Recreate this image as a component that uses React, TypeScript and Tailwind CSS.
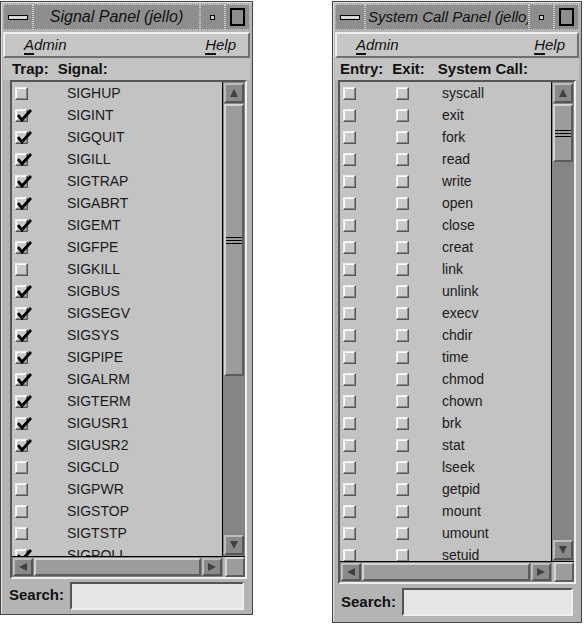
import React from "react";

const signals: [string, boolean][] = [
  ["SIGHUP", false], ["SIGINT", true], ["SIGQUIT", true], ["SIGILL", true], ["SIGTRAP", true],
  ["SIGABRT", true], ["SIGEMT", true], ["SIGFPE", true], ["SIGKILL", false], ["SIGBUS", true],
  ["SIGSEGV", true], ["SIGSYS", true], ["SIGPIPE", true], ["SIGALRM", true], ["SIGTERM", true],
  ["SIGUSR1", true], ["SIGUSR2", true], ["SIGCLD", false], ["SIGPWR", false], ["SIGSTOP", false],
  ["SIGTSTP", false], ["SIGPOLL", true],
];

const syscalls = [
  "syscall", "exit", "fork", "read", "write", "open", "close", "creat", "link", "unlink", "execv",
  "chdir", "time", "chmod", "chown", "brk", "stat", "lseek", "getpid", "mount", "umount", "setuid",
];

const font = "font-['Liberation_Sans',Arial,sans-serif]";

function Check({ on }: { on: boolean }) {
  return (
    <span className="relative block h-[13px] w-[13px] shrink-0 border border-[#555] border-l-[#eeeeee] border-t-[#eeeeee] bg-[#c9c9c9] shadow-[inset_-1px_-1px_0_#8a8a8a,inset_1px_1px_0_#ffffff]">
      {on && (
        <svg className="absolute left-[1px] top-[-2px]" width="15" height="14" viewBox="0 0 15 14">
          <path d="M1 7 L5 12 L14 2" fill="none" stroke="#000" strokeWidth="2.8" strokeLinejoin="miter" />
          <path d="M2 9 L5 12 L12 4" fill="none" stroke="#000" strokeWidth="2.2" />
        </svg>
      )}
    </span>
  );
}

function TitleBar({ title, center }: { title: string; center: boolean }) {
  return (
    <div className="flex h-[26px] bg-[#8e8e8e] text-[#111]">
      <div className="flex w-[30px] shrink-0 items-center justify-center border border-dotted border-[#cfcfcf]">
        <span className="block h-[5px] w-[20px] border border-black bg-[#d8d8d8]" />
      </div>
      <div className={`flex flex-1 overflow-hidden whitespace-nowrap border border-dotted border-[#cfcfcf] italic leading-[24px] ${center ? "justify-center text-[16px]" : "pl-[2px] text-[15px]"} ${font}`}>{title}</div>
      <div className="flex w-[25px] shrink-0 items-center justify-center border border-dotted border-[#cfcfcf]">
        <span className="block h-[5px] w-[5px] border border-black bg-[#d0d0d0]" />
      </div>
      <div className="flex w-[25px] shrink-0 items-center justify-center border border-dotted border-[#cfcfcf]">
        <span className="block h-[18px] w-[15px] border-2 border-black bg-[#8e8e8e]" />
      </div>
    </div>
  );
}

function MenuBar() {
  return (
    <div className={`mt-[2px] flex h-[26px] items-center justify-between border-2 border-[#707070] border-l-[#eeeeee] border-t-[#eeeeee] bg-[#c6c6c6] pl-[19px] pr-[12px] text-[15px] italic text-[#111] ${font}`}>
      <span><span className="underline decoration-2 underline-offset-[3px]">A</span>dmin</span>
      <span><span className="underline decoration-2 underline-offset-[3px]">H</span>elp</span>
    </div>
  );
}

function Arrow({ dir }: { dir: "up" | "down" | "left" | "right" }) {
  const pts = { up: "5,1 1,9 9,9", down: "1,1 9,1 5,9", left: "9,1 9,9 1,5", right: "1,1 1,9 9,5" }[dir];
  const size = dir === "up" || dir === "down" ? "h-[20px] w-[20px]" : "h-[18px] w-[20px]";
  return (
    <span className={`flex ${size} shrink-0 items-center justify-center border-2 border-[#555] border-l-[#bdbdbd] border-t-[#bdbdbd] bg-[#8a8a8a]`}>
      <svg width="10" height="10" viewBox="0 0 10 10"><polygon points={pts} fill="#404040" /></svg>
    </span>
  );
}

function ListBox({ height, thumbH, ml, children }: { height: number; thumbH: number; ml: string; children: React.ReactNode }) {
  return (
    <div className={`${ml} mr-[3px] border-2 border-[#eeeeee] border-l-[#555] border-t-[#555]`}>
      <div className="flex">
        <div className="flex-1 overflow-hidden border-r border-black bg-[#c3c3c3]" style={{ height }}>{children}</div>
        <div className="flex w-[22px] flex-col bg-[#858585] p-[1px]" style={{ height }}>
          <Arrow dir="up" />
          <div className="relative flex-1">
            <div className="absolute left-0 right-0 top-[1px] flex flex-col justify-center border-2 border-[#5c5c5c] border-l-[#d4d4d4] border-t-[#d4d4d4] bg-[#9c9c9c]" style={{ height: thumbH }}>
              <div className="flex flex-col gap-[2px] py-[1px]">
                <span className="h-[1px] bg-black" /><span className="h-[1px] bg-black" /><span className="h-[1px] bg-black" />
              </div>
            </div>
          </div>
          <Arrow dir="down" />
        </div>
      </div>
      <div className="flex border-t border-black">
        <div className="flex flex-1 bg-[#858585] p-[1px]">
          <Arrow dir="left" />
          <div className="mx-[1px] flex-1 border-2 border-[#5c5c5c] border-l-[#d4d4d4] border-t-[#d4d4d4] bg-[#9c9c9c]" />
          <Arrow dir="right" />
        </div>
        <div className="ml-[2px] h-[20px] w-[20px] border-2 border-[#5c5c5c] border-l-[#d4d4d4] border-t-[#d4d4d4] bg-[#9c9c9c]" />
      </div>
    </div>
  );
}

function Search({ h }: { h: string }) {
  return (
    <div className={`flex ${h} items-center gap-[6px] px-[6px] text-[15px] font-bold text-[#111] ${font}`}>
      <span>Search:</span>
      <span className="h-[28px] flex-1 border-2 border-[#eeeeee] border-l-[#555] border-t-[#555] bg-[#e5e5e5]" />
    </div>
  );
}

function Window({ width, children }: { width: number; children: React.ReactNode }) {
  return (
    <div className="border border-[#444] bg-[#b4b4b4] p-[2px] shadow-[inset_1px_1px_0_#e0e0e0]" style={{ width }}>
      {children}
    </div>
  );
}

export default function App() {
  return (
    <div className={`flex h-[625px] w-[587px] items-start bg-white pt-[1px] ${font}`}>
      <Window width={253}>
        <TitleBar title="Signal Panel (jello)" center />
        <MenuBar />
        <div className="flex h-[22px] items-center gap-[9px] bg-[#c3c3c3] px-[9px] text-[15px] font-bold text-[#111]">
          <span>Trap:</span><span>Signal:</span>
        </div>
        <ListBox height={474} thumbH={272} ml="ml-[7px]">
          {signals.map(([name, on]) => (
            <div key={name} className="flex h-[22px] items-center text-[14px] text-[#1a1a1a]">
              <span className="ml-[3px]"><Check on={on} /></span>
              <span className="ml-[39px]">{name}</span>
            </div>
          ))}
        </ListBox>
        <Search h="h-[33px]" />
      </Window>
      <div className="ml-[79px]">
        <Window width={250}>
          <TitleBar title="System Call Panel (jello)" center={false} />
          <MenuBar />
          <div className="flex h-[22px] items-center gap-[9px] bg-[#c3c3c3] px-[5px] text-[15px] font-bold text-[#111]">
            <span>Entry:</span><span>Exit:</span><span className="ml-[4px]">System Call:</span>
          </div>
          <ListBox height={479} thumbH={58} ml="ml-[3px]">
            {syscalls.map((name) => (
              <div key={name} className="flex h-[22px] items-center text-[14px] text-[#1a1a1a]">
                <span className="ml-[3px]"><Check on={false} /></span>
                <span className="ml-[40px]"><Check on={false} /></span>
                <span className="ml-[33px]">{name}</span>
              </div>
            ))}
          </ListBox>
          <Search h="h-[36px]" />
        </Window>
      </div>
    </div>
  );
}
